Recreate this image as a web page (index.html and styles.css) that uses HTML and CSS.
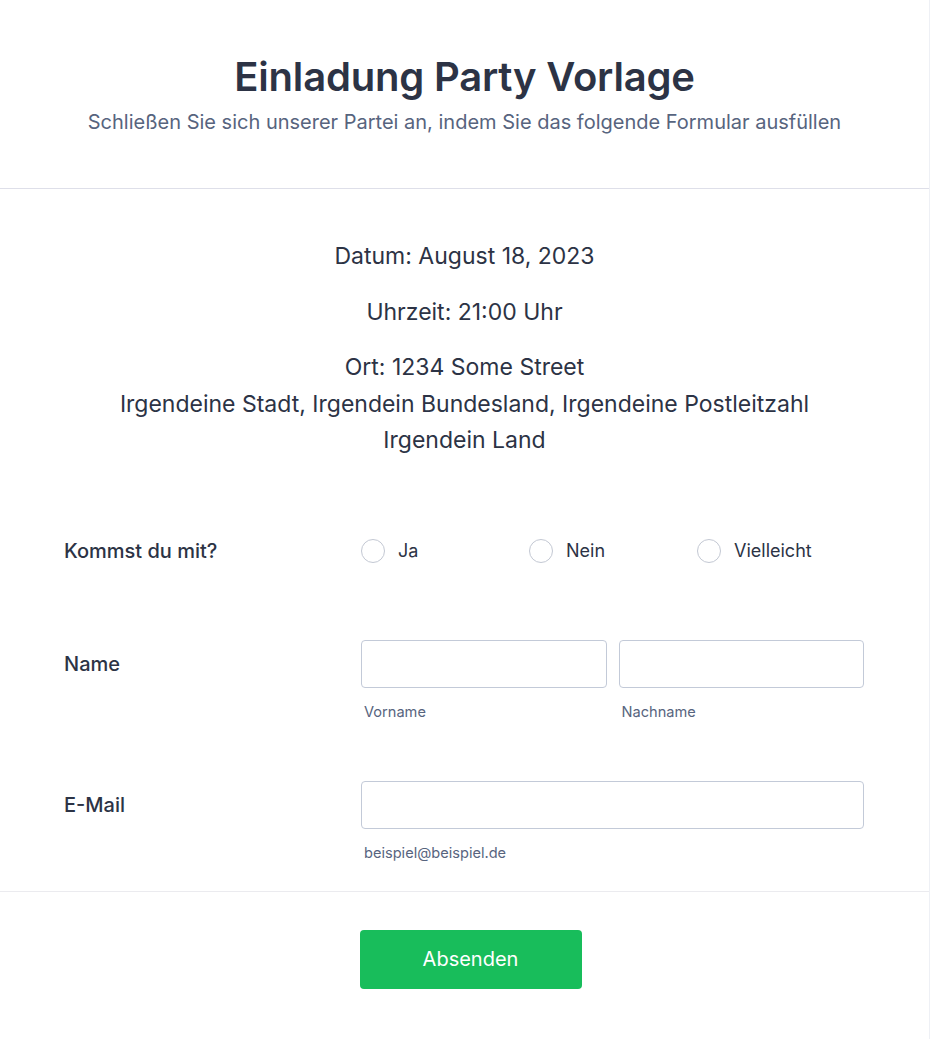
FILE: index.html
```html
<!DOCTYPE html>
<html lang="de">
<head>
<meta charset="utf-8">
<title>Einladung Party Vorlage</title>
<link rel="stylesheet" href="styles.css">
</head>
<body>
<main class="card">
  <header class="header">
    <h1 class="title">Einladung Party Vorlage</h1>
    <p class="subtitle">Schließen Sie sich unserer Partei an, indem Sie das folgende Formular ausfüllen</p>
  </header>

  <section class="info">
    <p>Datum: August 18, 2023</p>
    <p>Uhrzeit: 21:00 Uhr</p>
    <p>Ort: 1234 Some Street<br>Irgendeine Stadt, Irgendein Bundesland, Irgendeine Postleitzahl<br>Irgendein Land</p>
  </section>

  <form class="form">
    <div class="row row-radio">
      <div class="label">Kommst du mit?</div>
      <div class="radios">
        <label class="radio"><span class="circle"></span><span>Ja</span></label>
        <label class="radio"><span class="circle"></span><span>Nein</span></label>
        <label class="radio"><span class="circle"></span><span>Vielleicht</span></label>
      </div>
    </div>

    <div class="row row-name">
      <div class="label label-input">Name</div>
      <div class="fields two">
        <div class="field">
          <div class="input"></div>
          <div class="sublabel">Vorname</div>
        </div>
        <div class="field">
          <div class="input"></div>
          <div class="sublabel">Nachname</div>
        </div>
      </div>
    </div>

    <div class="row row-email">
      <div class="label label-input">E-Mail</div>
      <div class="fields">
        <div class="field">
          <div class="input"></div>
          <div class="sublabel">beispiel@beispiel.de</div>
        </div>
      </div>
    </div>
  </form>

  <footer class="footer">
    <button class="submit" type="button">Absenden</button>
  </footer>
</main>
</body>
</html>
```

FILE: styles.css
```css
* { box-sizing: border-box; }

html, body {
  margin: 0;
  padding: 0;
  background: #ffffff;
}

body {
  font-family: Inter, "Noto Sans", "Liberation Sans", sans-serif;
  color: #2c3345;
}

.card {
  width: 930px;
  height: 1039px;
  border-right: 1px solid #eef0f5;
  background: #ffffff;
}

.header {
  padding: 53px 0 51px;
  text-align: center;
  border-bottom: 1px solid #dedfe9;
}

.title {
  margin: 0;
  font-size: 40px;
  line-height: 48px;
  font-weight: 600;
  color: #2c3345;
  letter-spacing: -0.2px;
}

.subtitle {
  margin: 6px 0 0;
  font-size: 20px;
  line-height: 30px;
  font-weight: 400;
  color: #57647e;
}

.info {
  padding-top: 49px;
  text-align: center;
  display: flex;
  flex-direction: column;
  gap: 19px;
}

.info p {
  margin: 0;
  font-size: 23px;
  line-height: 36.5px;
  font-weight: 400;
  color: #2c3345;
}

.form {
  padding: 0 65px 0 64px;
  display: flex;
  flex-direction: column;
}

.row {
  display: grid;
  grid-template-columns: 297px 1fr;
}

.row-radio { margin-top: 80px; }
.row-name { margin-top: 77px; }
.row-email { margin-top: 59px; }

.label {
  font-size: 20px;
  line-height: 24px;
  font-weight: 500;
  color: #2c3345;
}

.label-input {
  line-height: 48px;
}

.radios {
  display: grid;
  grid-template-columns: 168px 168px 1fr;
}

.radio {
  display: flex;
  align-items: center;
  gap: 13px;
  font-size: 18px;
  line-height: 24px;
  color: #2c3345;
}

.circle {
  width: 24px;
  height: 24px;
  border-radius: 50%;
  border: 1.5px solid #c3c8d3;
  background: #fff;
  flex: none;
}

.fields {
  display: flex;
  gap: 12px;
}

.field {
  flex: 1;
}

.input {
  height: 48px;
  border: 1px solid #c3cad8;
  border-radius: 4px;
  background: #fff;
}

.sublabel {
  margin-top: 14px;
  font-size: 14.6px;
  line-height: 20px;
  color: #57647e;
  padding-left: 3px;
}

.footer {
  margin-top: 28px;
  border-top: 1px solid #ebebef;
  padding-top: 38px;
  display: flex;
  justify-content: center;
}

.submit {
  width: 222px;
  height: 59px;
  margin-left: 12px;
  border: none;
  border-radius: 4px;
  background: #18bd5b;
  color: #ffffff;
  font-family: Inter, "Noto Sans", "Liberation Sans", sans-serif;
  font-size: 20px;
  font-weight: 400;
  cursor: pointer;
}
```
